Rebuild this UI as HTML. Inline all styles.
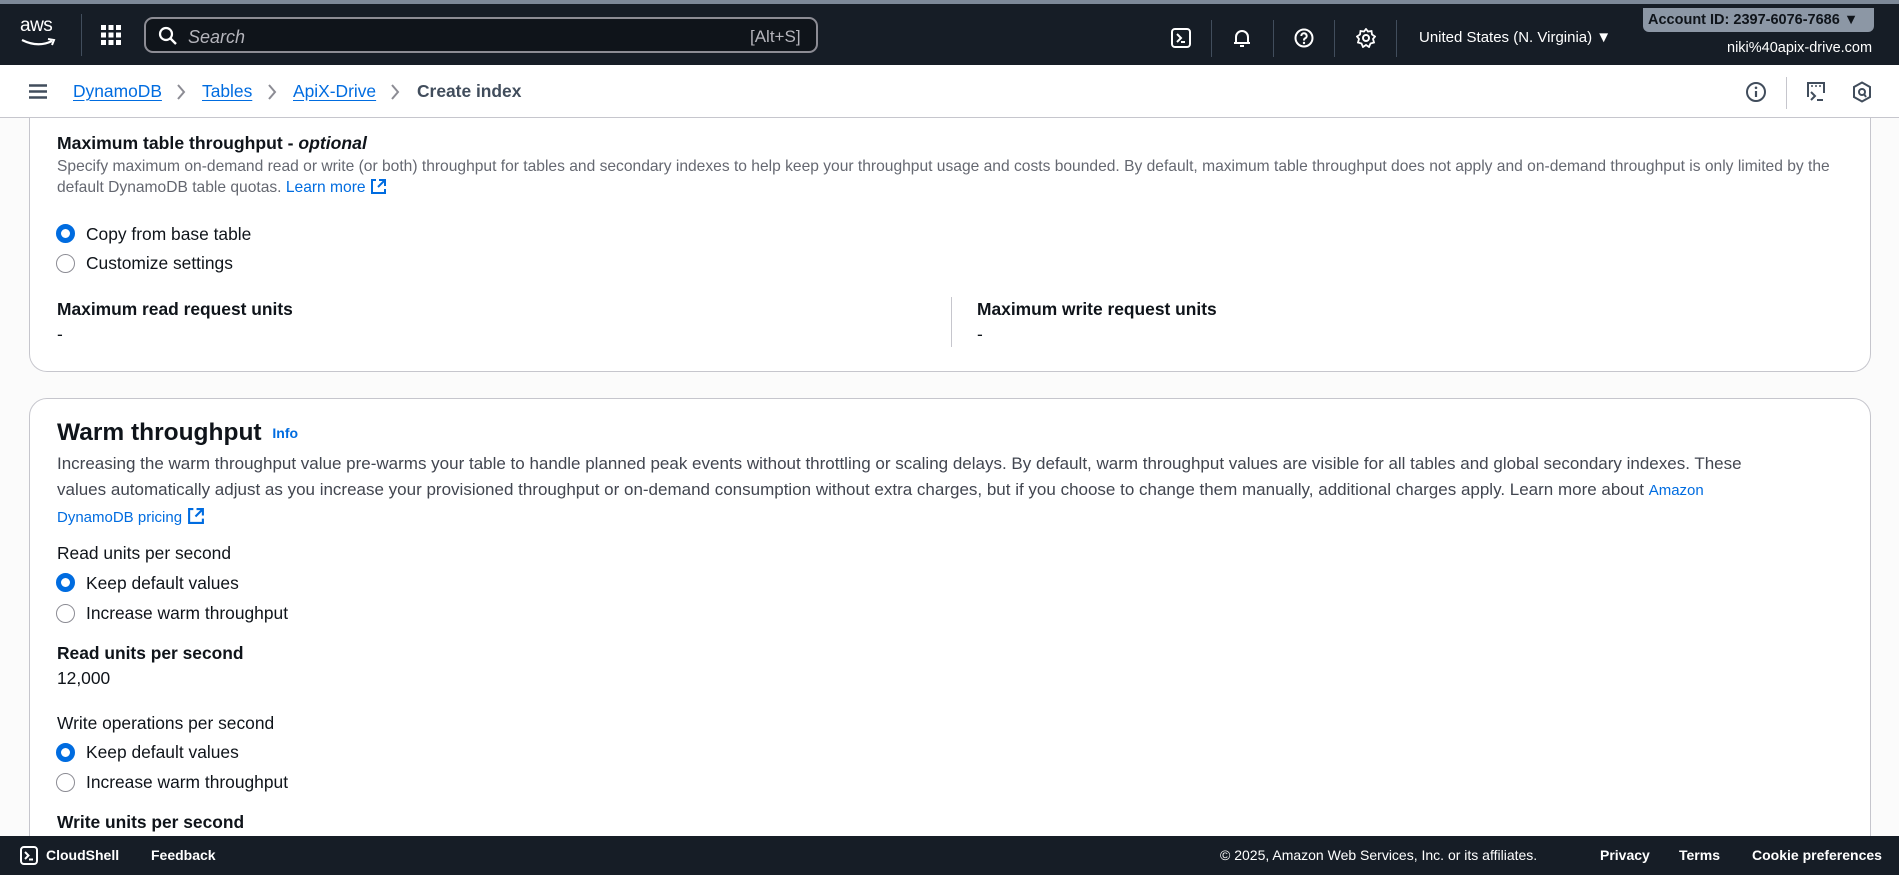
<!DOCTYPE html>
<html><head><meta charset="utf-8"><style>
*{margin:0;padding:0;box-sizing:border-box}
body{width:1899px;height:875px;overflow:hidden;background:#fbfbfb;font-family:"Liberation Sans",Arial,sans-serif;color:#0f141a;position:relative}
.a{position:absolute;white-space:nowrap}
.hdr{position:absolute;left:0;top:0;width:1899px;height:65px;background:#161d26;border-top:4px solid #7d8998;z-index:5}
.crumb{position:absolute;left:0;top:65px;width:1899px;height:53px;background:#fff;border-bottom:1px solid #c6c6cd;z-index:5}
.card{position:absolute;left:29px;width:1842px;background:#fff;border:1px solid #c6c6cd;border-radius:18px}
.lnk{color:#006ce0}
.ul{text-decoration:underline;text-underline-offset:3px}
.radio{position:absolute;width:19px;height:19px;border-radius:50%;border:1.5px solid #8c8c94;background:#fff}
.radio.on{border:5.5px solid #006ce0}
.lbl{font-size:17.4px;line-height:20px}
.b{font-weight:bold}
.foot{position:absolute;left:0;top:836px;width:1899px;height:39px;background:#161d26;color:#fff;font-size:14px;z-index:5}
.sep{position:absolute;top:16px;width:1px;height:37px;background:#414d5c}
</style></head><body>
<div class="hdr">
  <div class="a" style="left:20px;top:12px;color:#fff;font-size:19px;line-height:20px;letter-spacing:-0.5px">aws</div>
  <svg class="a" style="left:20px;top:34px" width="38" height="10" viewBox="0 0 38 10"><path d="M2 2 Q18 10 32 3" stroke="#fff" stroke-width="2.2" fill="none"/><path d="M28 1 L34 2 L32 7" stroke="#fff" stroke-width="2" fill="none"/></svg>
  <div class="a" style="left:81px;top:10px;width:1px;height:42px;background:#414d5c"></div>
  <svg class="a" style="left:101px;top:21px" width="20" height="20" viewBox="0 0 20 20" fill="#fff"><rect x="0" y="0" width="5" height="5"/><rect x="7.5" y="0" width="5" height="5"/><rect x="15" y="0" width="5" height="5"/><rect x="0" y="7.5" width="5" height="5"/><rect x="7.5" y="7.5" width="5" height="5"/><rect x="15" y="7.5" width="5" height="5"/><rect x="0" y="15" width="5" height="5"/><rect x="7.5" y="15" width="5" height="5"/><rect x="15" y="15" width="5" height="5"/></svg>
  <div class="a" style="left:144px;top:13px;width:674px;height:36px;border:2px solid #8c8c94;border-radius:9px;background:#0f141a"></div>
  <svg class="a" style="left:158px;top:22px" width="20" height="20" viewBox="0 0 20 20"><circle cx="8" cy="8" r="6" stroke="#fff" stroke-width="2.2" fill="none"/><path d="M12.5 12.5 L18 18" stroke="#fff" stroke-width="2.4"/></svg>
  <div class="a" style="left:188px;top:23px;color:#b4b4bb;font-size:18px;font-style:italic;line-height:20px">Search</div>
  <div class="a" style="left:750px;top:23px;color:#b4b4bb;font-size:17px;line-height:20px">[Alt+S]</div>
  <svg class="a" style="left:1171px;top:24px" width="20" height="20" viewBox="0 0 20 20"><rect x="1" y="1" width="18" height="18" rx="3" stroke="#fff" stroke-width="2" fill="none"/><path d="M6 6 L10 10 L6 14 M10 14 H14" stroke="#fff" stroke-width="2" fill="none"/></svg>
  <div class="sep" style="left:1211px"></div>
  <svg class="a" style="left:1232px;top:24px" width="20" height="21" viewBox="0 0 20 21"><path d="M4 15 V9 a6 6 0 0 1 12 0 V15 H2 H18" stroke="#fff" stroke-width="2" fill="none"/><path d="M8 18 H12" stroke="#fff" stroke-width="2"/></svg>
  <div class="sep" style="left:1273px"></div>
  <svg class="a" style="left:1294px;top:24px" width="20" height="20" viewBox="0 0 20 20"><circle cx="10" cy="10" r="8.5" stroke="#fff" stroke-width="2" fill="none"/><path d="M7.3 8 a2.7 2.7 0 1 1 3.5 2.5 Q10 11 10 12.5" stroke="#fff" stroke-width="2" fill="none"/><circle cx="10" cy="15" r="1.2" fill="#fff"/></svg>
  <div class="sep" style="left:1334px"></div>
  <svg class="a" style="left:1356px;top:24px" width="20" height="20" viewBox="0 0 20 20"><path d="M10 1 L12 3.5 L15.5 3 L16 6.5 L19 8.5 L17 11 L18 14.5 L14.5 15.5 L13 19 L10 17 L7 19 L5.5 15.5 L2 14.5 L3 11 L1 8.5 L4 6.5 L4.5 3 L8 3.5 Z" stroke="#fff" stroke-width="1.8" fill="none"/><circle cx="10" cy="10" r="3" stroke="#fff" stroke-width="2" fill="none"/></svg>
  <div class="sep" style="left:1396px"></div>
  <div class="a" style="left:1419px;top:25px;color:#fff;font-size:15px;line-height:18px">United States (N. Virginia) &#9660;</div>
  <div class="a" style="left:1643px;top:4px;width:231px;height:24px;background:#8c97a5;border-radius:0 0 6px 6px"></div>
  <div class="a" style="left:1648px;top:7px;color:#0f141a;font-size:14.5px;font-weight:bold;line-height:18px">Account ID: 2397-6076-7686 &#9660;</div>
  <div class="a" style="left:1727px;top:35px;color:#fff;font-size:14.5px;line-height:18px">niki%40apix-drive.com</div>
</div>
<div class="crumb">
  <svg class="a" style="left:29px;top:19px" width="18" height="15" viewBox="0 0 18 15"><path d="M0 1.5 H18 M0 7.5 H18 M0 13.5 H18" stroke="#414d5c" stroke-width="2.4"/></svg>
  <div class="a lbl" style="left:73px;top:16px"><span class="lnk ul">DynamoDB</span></div>
  <svg class="a" style="left:176px;top:19px" width="10" height="16" viewBox="0 0 10 16"><path d="M2 1 L8 8 L2 15" stroke="#8c8c94" stroke-width="2" fill="none"/></svg>
  <div class="a lbl" style="left:202px;top:16px"><span class="lnk ul">Tables</span></div>
  <svg class="a" style="left:267px;top:19px" width="10" height="16" viewBox="0 0 10 16"><path d="M2 1 L8 8 L2 15" stroke="#8c8c94" stroke-width="2" fill="none"/></svg>
  <div class="a lbl" style="left:293px;top:16px"><span class="lnk ul">ApiX-Drive</span></div>
  <svg class="a" style="left:390px;top:19px" width="10" height="16" viewBox="0 0 10 16"><path d="M2 1 L8 8 L2 15" stroke="#8c8c94" stroke-width="2" fill="none"/></svg>
  <div class="a lbl" style="left:417px;top:16px;color:#414d5c;font-weight:bold">Create index</div>
  <svg class="a" style="left:1745px;top:16px" width="22" height="22" viewBox="0 0 22 22"><circle cx="11" cy="11" r="9" stroke="#414d5c" stroke-width="2" fill="none"/><path d="M11 10 V16" stroke="#414d5c" stroke-width="2.2"/><circle cx="11" cy="6.8" r="1.3" fill="#414d5c"/></svg>
  <div class="a" style="left:1786px;top:12px;width:1px;height:32px;background:#c6c6cd"></div>
  <svg class="a" style="left:1805px;top:16px" width="22" height="22" viewBox="0 0 22 22"><path d="M3 16 V2 H19 V12" stroke="#414d5c" stroke-width="2" fill="none"/><path d="M6 5 H8 M10 5 H12 M14 5 H16" stroke="#414d5c" stroke-width="1.6"/><path d="M6 11 L10 15 L6 19 M12 19 H18" stroke="#414d5c" stroke-width="2" fill="none"/></svg>
  <svg class="a" style="left:1852px;top:16px" width="20" height="22" viewBox="0 0 20 22"><path d="M10 1.5 L18 6 V16 L10 20.5 L2 16 V6 Z" stroke="#414d5c" stroke-width="2" fill="none"/><circle cx="10" cy="11" r="3" stroke="#414d5c" stroke-width="2" fill="none"/><path d="M12 13 L14 16" stroke="#414d5c" stroke-width="2"/></svg>
</div>

<div class="card" style="top:80px;height:292px;border-top:none;border-radius:0 0 18px 18px"></div>
<div class="a b" style="left:57px;top:133px;font-size:17.6px;line-height:20px">Maximum table throughput - <i>optional</i></div>
<div class="a" style="left:57px;top:158px;font-size:15.6px;line-height:18px;color:#656871">Specify maximum on-demand read or write (or both) throughput for tables and secondary indexes to help keep your throughput usage and costs bounded. By default, maximum table throughput does not apply and on-demand throughput is only limited by the</div>
<div class="a" style="left:57px;top:178px;font-size:15.6px;line-height:18px;color:#656871">default DynamoDB table quotas. <span class="lnk">Learn more</span> <svg width="17" height="17" viewBox="0 0 17 17" style="vertical-align:-3px"><path d="M6 2 H2 V15 H15 V11" stroke="#006ce0" stroke-width="2" fill="none"/><path d="M9 2 H15 V8 M15 2 L8 9" stroke="#006ce0" stroke-width="2" fill="none"/></svg></div>
<div class="radio on" style="left:56px;top:224px"></div>
<div class="a lbl" style="left:86px;top:224px">Copy from base table</div>
<div class="radio" style="left:56px;top:254px"></div>
<div class="a lbl" style="left:86px;top:253px">Customize settings</div>
<div class="a b lbl" style="left:57px;top:299px">Maximum read request units</div>
<div class="a lbl" style="left:57px;top:324px">-</div>
<div class="a" style="left:951px;top:297px;width:1px;height:50px;background:#c6c6cd"></div>
<div class="a b lbl" style="left:977px;top:299px">Maximum write request units</div>
<div class="a lbl" style="left:977px;top:324px">-</div>

<div class="card" style="top:398px;height:460px"></div>
<div class="a b" style="left:57px;top:419px;font-size:24.5px;line-height:28px">Warm throughput <span class="lnk" style="font-size:14px;vertical-align:2px;margin-left:4px">Info</span></div>
<div class="a" style="left:57px;top:451px;font-size:17px;line-height:26px;color:#424650;white-space:normal;width:1800px">Increasing the warm throughput value pre-warms your table to handle planned peak events without throttling or scaling delays. By default, warm throughput values are visible for all tables and global secondary indexes. These<br>values automatically adjust as you increase your provisioned throughput or on-demand consumption without extra charges, but if you choose to change them manually, additional charges apply. Learn more about <span class="lnk" style="font-size:15px">Amazon</span><br><span class="lnk" style="font-size:15px">DynamoDB pricing</span> <svg width="18" height="18" viewBox="0 0 17 17" style="vertical-align:-3px"><path d="M6 2 H2 V15 H15 V11" stroke="#006ce0" stroke-width="2" fill="none"/><path d="M9 2 H15 V8 M15 2 L8 9" stroke="#006ce0" stroke-width="2" fill="none"/></svg></div>
<div class="a lbl" style="left:57px;top:543px">Read units per second</div>
<div class="radio on" style="left:56px;top:573px"></div>
<div class="a lbl" style="left:86px;top:573px">Keep default values</div>
<div class="radio" style="left:56px;top:604px"></div>
<div class="a lbl" style="left:86px;top:603px">Increase warm throughput</div>
<div class="a b lbl" style="left:57px;top:643px">Read units per second</div>
<div class="a lbl" style="left:57px;top:668px">12,000</div>
<div class="a lbl" style="left:57px;top:713px">Write operations per second</div>
<div class="radio on" style="left:56px;top:743px"></div>
<div class="a lbl" style="left:86px;top:742px">Keep default values</div>
<div class="radio" style="left:56px;top:773px"></div>
<div class="a lbl" style="left:86px;top:772px">Increase warm throughput</div>
<div class="a b lbl" style="left:57px;top:812px">Write units per second</div>

<div class="foot">
  <svg class="a" style="left:20px;top:10px" width="18" height="19" viewBox="0 0 18 19"><rect x="1" y="1" width="16" height="17" rx="3" stroke="#fff" stroke-width="2" fill="none"/><path d="M5 6 L8.5 9.5 L5 13 M9 13.5 H13" stroke="#fff" stroke-width="2" fill="none"/></svg>
  <div class="a b" style="left:46px;top:11px">CloudShell</div>
  <div class="a b" style="left:151px;top:11px">Feedback</div>
  <div class="a" style="left:1220px;top:11px">© 2025, Amazon Web Services, Inc. or its affiliates.</div>
  <div class="a b" style="left:1600px;top:11px">Privacy</div>
  <div class="a b" style="left:1679px;top:11px">Terms</div>
  <div class="a b" style="left:1752px;top:11px">Cookie preferences</div>
</div>
</body></html>
